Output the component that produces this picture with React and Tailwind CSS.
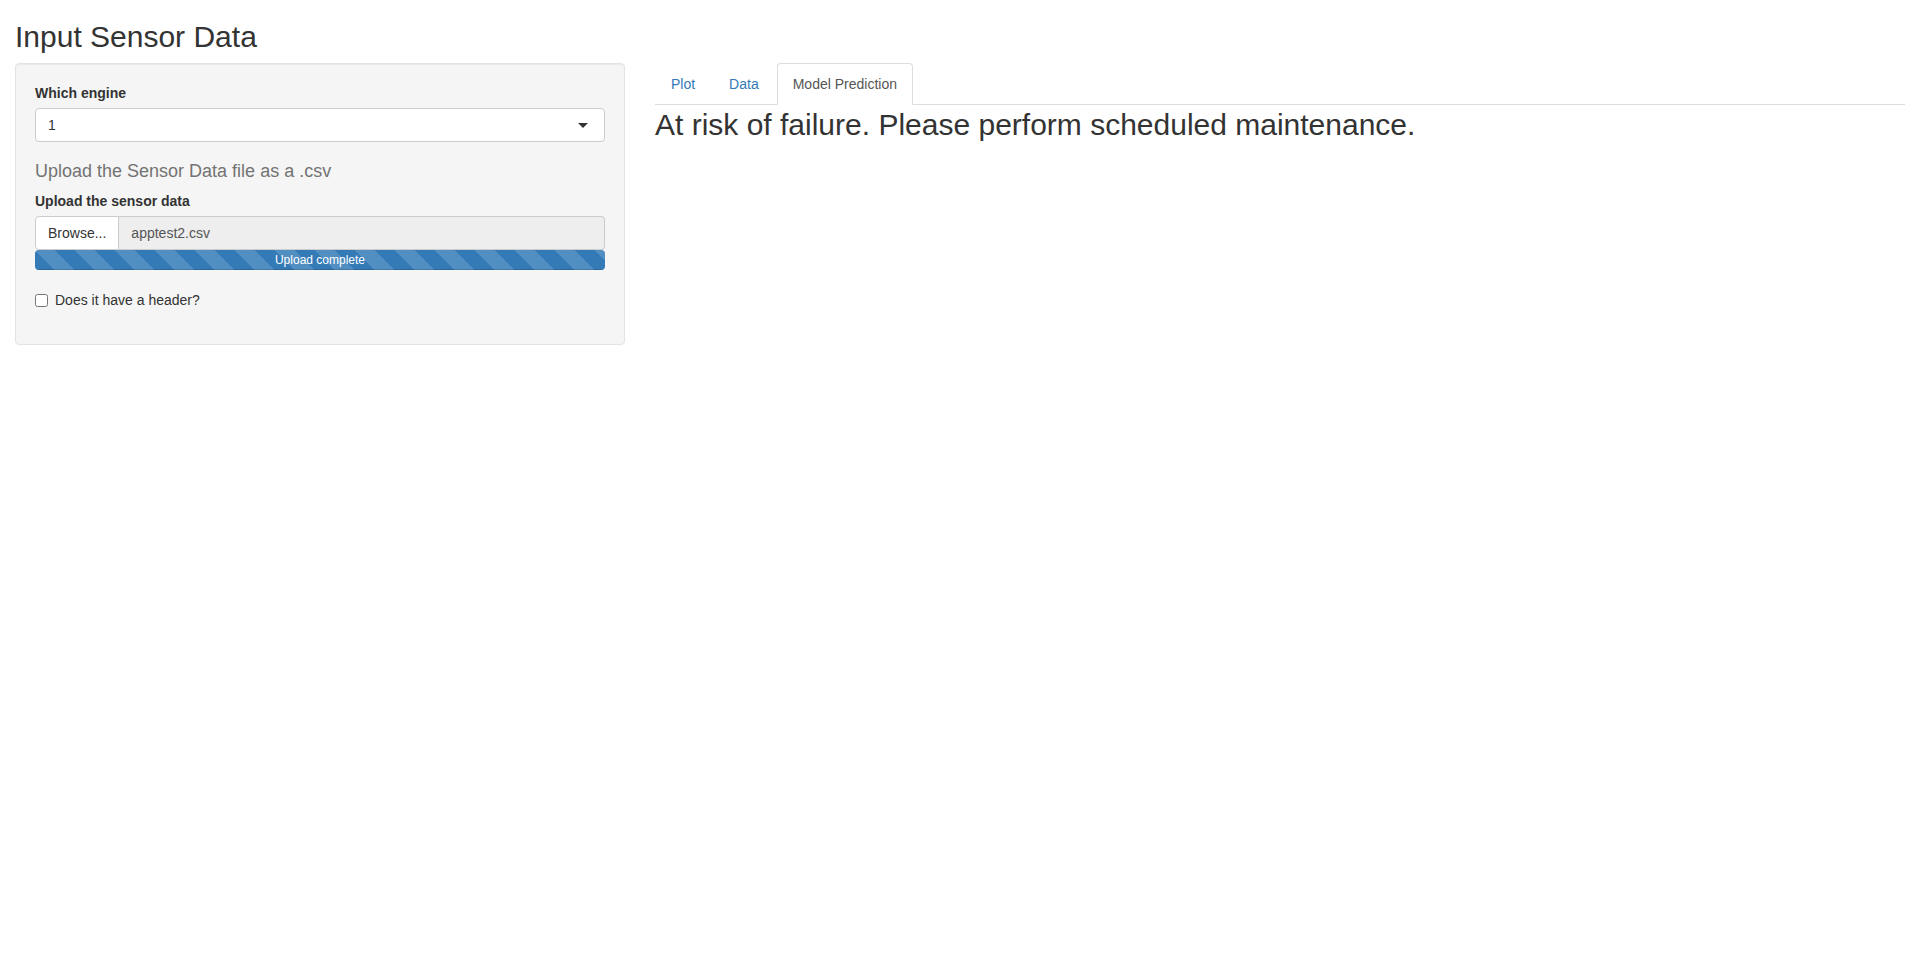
import React from "react";

const stripes = {
  backgroundImage:
    "linear-gradient(45deg, rgba(255,255,255,.15) 25%, transparent 25%, transparent 50%, rgba(255,255,255,.15) 50%, rgba(255,255,255,.15) 75%, transparent 75%, transparent)",
  backgroundSize: "40px 40px",
};

function Sidebar() {
  return (
    <div className="rounded-[4px] border border-[#e3e3e3] bg-[#f5f5f5] p-[19px] shadow-[inset_0_1px_1px_rgba(0,0,0,0.05)]">
      <div>
        <label className="mb-[5px] block text-[14px] font-bold leading-[20px]">Which engine</label>
        <div className="relative h-[34px] rounded-[4px] border border-[#cccccc] bg-white px-[12px] py-[6px] text-[14px] leading-[20px]">
          1
          <span className="absolute right-[16px] top-[14px] h-0 w-0 border-x-[5px] border-t-[5px] border-x-transparent border-t-[#333333]" />
        </div>
      </div>

      <h4 className="mt-[19px] mb-[10px] text-[18px] font-normal leading-[20px] text-[#737373]">
        Upload the Sensor Data file as a .csv
      </h4>

      <div>
        <label className="mb-[5px] block text-[14px] font-bold leading-[20px]">Upload the sensor data</label>
        <div className="flex h-[34px] text-[14px] leading-[20px]">
          <button className="rounded-l-[4px] border border-[#cccccc] bg-white px-[12px] py-[6px] text-[#333333]">
            Browse...
          </button>
          <div className="flex-1 rounded-r-[4px] border border-l-0 border-[#cccccc] bg-[#eeeeee] px-[12px] py-[6px] text-[#555555]">
            apptest2.csv
          </div>
        </div>
        <div className="h-[20px] overflow-hidden rounded-[4px] bg-[#f5f5f5] shadow-[inset_0_1px_2px_rgba(0,0,0,0.1)]">
          <div
            className="h-full w-full bg-[#337ab7] text-center text-[12px] leading-[20px] text-white shadow-[inset_0_-1px_0_rgba(0,0,0,0.15)]"
            style={stripes}
          >
            Upload complete
          </div>
        </div>
      </div>

      <div className="mt-[20px] mb-[15px] flex h-[20px] items-start text-[14px] leading-[20px]">
        <input type="checkbox" className="mt-[4px] mr-[7px] ml-0 h-[13px] w-[13px]" />
        <span>Does it have a header?</span>
      </div>
    </div>
  );
}

function Tabs() {
  const tabs = ["Plot", "Data", "Model Prediction"];
  const active = "Model Prediction";
  return (
    <ul className="flex border-b border-[#dddddd] text-[14px] leading-[20px]">
      {tabs.map((t) => (
        <li key={t} className="mr-[2px] -mb-px">
          {t === active ? (
            <a className="block cursor-default rounded-t-[4px] border border-[#dddddd] border-b-transparent bg-white px-[15px] py-[10px] text-[#555555]">
              {t}
            </a>
          ) : (
            <a className="block rounded-t-[4px] border border-transparent px-[15px] py-[10px] text-[#337ab7]">
              {t}
            </a>
          )}
        </li>
      ))}
    </ul>
  );
}

export default function App() {
  return (
    <div
      className="min-h-screen bg-white px-[15px] text-[#333333]"
      style={{ fontFamily: '"Liberation Sans", Arial, Helvetica, sans-serif' }}
    >
      <h2 className="mt-[20px] mb-[10px] text-[30px] font-normal leading-[33px]">Input Sensor Data</h2>
      <div className="-mx-[15px] flex">
        <div className="w-1/3 px-[15px]">
          <Sidebar />
        </div>
        <div className="w-2/3 px-[15px]">
          <Tabs />
          <div className="pt-[3px] text-[30px] leading-[33px]">
            At risk of failure. Please perform scheduled maintenance.
          </div>
        </div>
      </div>
    </div>
  );
}
